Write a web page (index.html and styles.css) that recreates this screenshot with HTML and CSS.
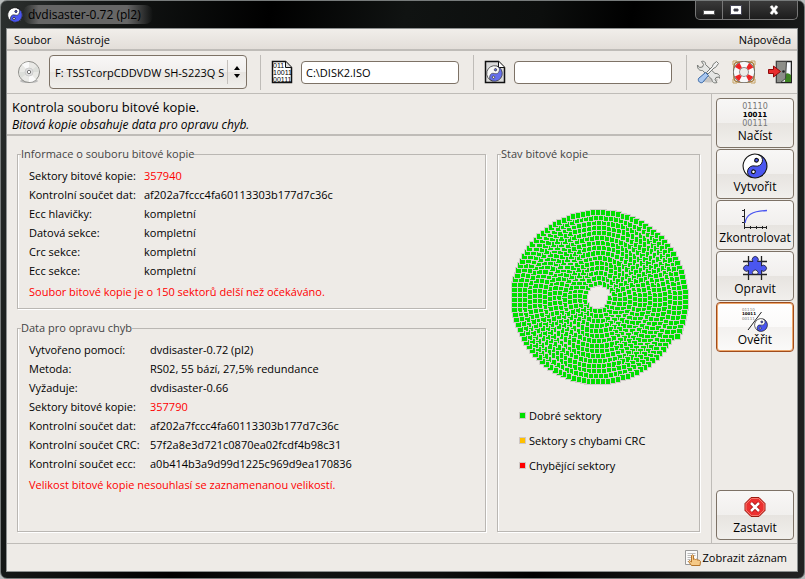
FILE: index.html
```
<!DOCTYPE html>
<html lang="cs">
<head>
<meta charset="utf-8">
<title>dvdisaster-0.72 (pl2)</title>
<link rel="stylesheet" href="styles.css">
</head>
<body>
<svg class="defs" aria-hidden="true">
  <symbol id="yinyang" viewBox="0 0 24 24">
    <g transform="rotate(15 12 12)">
    <circle cx="12" cy="12" r="11" fill="#fff"/>
    <path d="M12 1A11 11 0 0 1 12 23A5.500 5.500 0 0 1 12 12A5.500 5.500 0 0 0 12 1Z" fill="#4a56f0"/>
    <circle cx="12" cy="12" r="11" fill="none" stroke="#111"/>
    <path d="M12 23A5.500 5.500 0 0 1 12 12A5.500 5.500 0 0 0 12 1" fill="none" stroke="#111" stroke-width=".8"/>
    <circle cx="12" cy="6.500" r="1.700" fill="#4a56f0" stroke="#111"/>
    <circle cx="12" cy="17.500" r="1.700" fill="#fff" stroke="#111"/>
    </g>
  </symbol>
</svg>
<div class="window">
  <header class="titlebar">
    <svg class="app-icon" viewBox="0 0 24 24"><use href="#yinyang"/></svg>
    <h1 class="title">dvdisaster-0.72 (pl2)</h1>
    <div class="controls">
      <button class="ctl" aria-label="Minimalizovat"><svg viewBox="0 0 14 12"><rect x="1.500" y="6.500" width="11" height="4" fill="#fff" stroke="#555"/></svg></button>
      <button class="ctl" aria-label="Maximalizovat"><svg viewBox="0 0 14 12"><path d="M1.500 1.500h11v9h-11zM5 5v2h4V5z" fill="#fff" fill-rule="evenodd" stroke="#445" /></svg></button>
      <button class="ctl close" aria-label="Zavřít"><svg viewBox="0 0 14 12"><path d="M4 2l6 8M10 2l-6 8" stroke="#555" stroke-width="4"/><path d="M4 2l6 8M10 2l-6 8" stroke="#fff" stroke-width="2.600"/></svg></button>
    </div>
  </header>
  <div class="client">
    <nav class="menubar">
      <button class="menu">Soubor</button>
      <button class="menu">Nástroje</button>
      <button class="menu help">Nápověda</button>
    </nav>
    <div class="toolbar">
      <svg class="disc" viewBox="0 0 24 24"><ellipse cx="12" cy="21" rx="9" ry="2" fill="#bbb"/><circle cx="12" cy="12" r="10.500" fill="#e9e9e6" stroke="#8d8d89"/><path d="M12 12L5 4.500A10 10 0 0 1 12 2zM12 12l7 7.500A10 10 0 0 1 12 22z" fill="#fafafa"/><path d="M12 12L2 12A10 10 0 0 0 4 18zM12 12L22 12A10 10 0 0 0 20 6z" fill="#dcdeda"/><circle cx="12" cy="12" r="4" fill="#e0e0e0" stroke="#ccc"/><circle cx="12" cy="12" r="1.700" fill="#fff" stroke="#777"/></svg>
      <div class="drive">
        <select class="drive-select" aria-label="Mechanika"><option>F: TSSTcorpCDDVDW SH-S223Q SB03</option></select>
        <svg class="arrows" viewBox="0 0 8 14"><path d="M1 5l3-4 3 4zM1 9l3 4 3-4z"/></svg>
      </div>
      <span class="sep"></span>
      <svg class="file-icon" viewBox="0 0 22 24"><path d="M1.500 1.500h13l6 6v15h-19z" fill="#fff" stroke="#111" stroke-width="1.500"/><path d="M14.500 1.500v6h6" fill="#ddd" stroke="#111"/><g class="bits"><text x="2" y="8">011</text><text x="2" y="15">10011</text><text x="2" y="22">00111</text></g></svg>
      <input class="path" type="text" aria-label="Soubor bitové kopie" value="C:\DISK2.ISO">
      <span class="sep"></span>
      <svg class="file-icon" viewBox="0 0 22 24"><path d="M1.500 1.500h13l6 6v15h-19z" fill="#d8d8d8" stroke="#111" stroke-width="1.500"/><path d="M14.500 1.500v6h6" fill="#fff" stroke="#111"/><use href="#yinyang" x="2" y="5" width="17" height="17" opacity=".8"/></svg>
      <input class="path" type="text" aria-label="Soubor pro opravu chyb" value="">
      <span class="sep last"></span>
      <div class="tools">
        <button class="tool" aria-label="Předvolby"><svg viewBox="0 0 24 24"><ellipse cx="13" cy="20" rx="9" ry="2.500" fill="#c8c6c3"/><path d="M5.500 1.500l2 3-1 2.500-3 .5-2-2.500c-.5 3 1.500 6 5 5.500l9.500 9c0 3 2.500 4 5 3l-2-3 1-2 3-.5 1 1.500c.5-3-2-5.500-5-5l-9.500-9c.5-2-1.500-4-4-3z" fill="#e5e6e4" stroke="#777a76"/><path d="M20.500 1.500l2 2-3 4-1.500.5-6 6-1.500-1.500 6-6 .5-2z" fill="#f2f2f2" stroke="#777a76"/><path d="M9.500 12.500l3 3-6 7c-2 1-5-1-4-4z" fill="#a9c7ef" stroke="#3465a4"/></svg></button>
        <button class="tool" aria-label="Nápověda k programu"><svg viewBox="0 0 24 24"><rect x="2" y="2" width="20" height="20" rx="4" fill="none" stroke="#a77b37" stroke-width="1.500"/><path d="M1 5V1h4M19 1h4v4M23 19v4h-4M5 23H1v-4" fill="none" stroke="#c6a262"/><circle cx="12" cy="12" r="7.500" fill="none" stroke="#666" stroke-width="7"/><circle cx="12" cy="12" r="7.500" fill="none" stroke="#f8f8f8" stroke-width="5.500"/><circle cx="12" cy="12" r="7.500" fill="none" stroke="#ee2424" stroke-width="5.500" stroke-dasharray="4.500 7.280" stroke-dashoffset="-3.640"/></svg></button>
        <button class="tool" aria-label="Ukončit"><svg viewBox="0 0 24 24"><path d="M8.500 1.500h15v21h-15z" fill="#f8fbff" stroke="#222" stroke-width="1.500"/><path d="M17 14q3-2 6 1v7h-6z" fill="#3d8321"/><path d="M8.500 1.500h10l-1 17-5 4h-4z" fill="#8c8e89" stroke="#444"/><circle cx="15.500" cy="11.500" r="1.300" fill="#222"/><path d="M.5 9.500h5V6l7 5.500-7 5.500v-3.500H.5z" fill="#e82c2c" stroke="#8e0909"/></svg></button>
      </div>
    </div>
    <div class="middle">
      <main class="content">
        <div class="heading">
          <h2>Kontrola souboru bitové kopie.</h2>
          <p>Bitová kopie obsahuje data pro opravu chyb.</p>
        </div>
        <div class="panels">
          <fieldset class="frame info">
            <legend>Informace o souboru bitové kopie</legend>
            <dl class="rows">
              <dt>Sektory bitové kopie:</dt><dd class="bad">357940</dd>
              <dt>Kontrolní součet dat:</dt><dd>af202a7fccc4fa60113303b177d7c36c</dd>
              <dt>Ecc hlavičky:</dt><dd>kompletní</dd>
              <dt>Datová sekce:</dt><dd>kompletní</dd>
              <dt>Crc sekce:</dt><dd>kompletní</dd>
              <dt>Ecc sekce:</dt><dd>kompletní</dd>
            </dl>
            <p class="message bad">Soubor bitové kopie je o 150 sektorů delší než očekáváno.</p>
          </fieldset>
          <fieldset class="frame ecc">
            <legend>Data pro opravu chyb</legend>
            <dl class="rows wide">
              <dt>Vytvořeno pomocí:</dt><dd>dvdisaster-0.72 (pl2)</dd>
              <dt>Metoda:</dt><dd>RS02, 55 bází, 27,5% redundance</dd>
              <dt>Vyžaduje:</dt><dd>dvdisaster-0.66</dd>
              <dt>Sektory bitové kopie:</dt><dd class="bad">357790</dd>
              <dt>Kontrolní součet dat:</dt><dd>af202a7fccc4fa60113303b177d7c36c</dd>
              <dt>Kontrolní součet CRC:</dt><dd>57f2a8e3d721c0870ea02fcdf4b98c31</dd>
              <dt>Kontrolní součet ecc:</dt><dd>a0b414b3a9d99d1225c969d9ea170836</dd>
            </dl>
            <p class="message bad">Velikost bitové kopie nesouhlasí se zaznamenanou velikostí.</p>
          </fieldset>
          <fieldset class="frame state">
            <legend>Stav bitové kopie</legend>
            <svg id="spiral" class="spiral" viewBox="0 0 180 180" role="img" aria-label="Stav sektorů"></svg>
            <ul class="key">
              <li><i class="good"></i>Dobré sektory</li>
              <li><i class="crc"></i>Sektory s chybami CRC</li>
              <li><i class="missing"></i>Chybějící sektory</li>
            </ul>
          </fieldset>
        </div>
      </main>
      <aside class="actions">
        <button class="action"><svg viewBox="0 0 28 28"><g class="read"><text x="14" y="8">01110</text><text class="on" x="14" y="16">10011</text><text x="14" y="25">00111</text></g></svg><span>Načíst</span></button>
        <button class="action"><svg viewBox="0 0 28 28"><use href="#yinyang" x="1" y="1" width="26" height="26"/></svg><span>Vytvořit</span></button>
        <button class="action"><svg viewBox="0 0 28 28"><path d="M3.500 6v18.500H26M1 7.500h2M1 13.500h2M1 19.500h2M9.500 23v3M15.500 23v3M21.500 23v3M25.500 23v3M3.500 24v2" fill="none" stroke="#222"/><path d="M4 20C5 12 11 8 26 7.500" fill="none" stroke="#4a56f0" stroke-width="1.300"/></svg><span>Zkontrolovat</span></button>
        <button class="action"><svg viewBox="0 0 28 28"><path d="M7.500 2v24M20.500 2v24M2 7.500h24M2 20.500h24" stroke="#222" stroke-width="1.300"/><path d="M7.500 7.500h4.500a3 3 0 1 1 4.500 0h4v4.500a3 3 0 1 1 0 4.500v4h-4a2.800 2.800 0 1 0-4.500 0h-4.500v-4a3 3 0 1 1 0-4.500z" fill="#4a56f0" stroke="#223" stroke-width=".8"/></svg><span>Opravit</span></button>
        <button class="action active"><svg viewBox="0 0 28 28"><g class="tiny"><text x="1" y="6">01110</text><text class="on" x="1" y="10">10011</text><text x="1" y="15">00111</text></g><path d="M20.500 7L7 25" stroke="#222"/><use href="#yinyang" x="13" y="13" width="14" height="14"/></svg><span>Ověřit</span></button>
        <button class="action stop"><svg viewBox="0 0 28 28"><path d="M10 4.500h8l6 6v7l-6 6h-8l-6-6v-7z" fill="#ec3030" stroke="#9a1a10"/><path d="M10.500 5.500h7l5.500 5.500v6l-5.500 5.500h-7L5 17v-6z" fill="none" stroke="#f47a6e"/><path d="M10 10l8 8M18 10l-8 8" stroke="#a01010" stroke-width="4"/><path d="M10 10l8 8M18 10l-8 8" stroke="#fff" stroke-width="2.500"/></svg><span>Zastavit</span></button>
      </aside>
    </div>
    <footer class="status">
      <button class="log"><svg viewBox="0 0 16 16"><path d="M.5.5h12v14H.5z" fill="#fafafa" stroke="#999"/><path d="M2.500 3.500h8M2.500 5.500h8M2.500 7.500h5M2.500 9.500h3M2.500 11.500h3" stroke="#bbb"/><path d="M6.500 15.500l-3-4 1-1 2 1.500V5.500q1-1.500 2 0v4q1-1 2 0q1-1 2 .5q2-.5 3 1.500l-.5 4z" fill="#f5c987" stroke="#b5752c"/></svg>Zobrazit záznam</button>
    </footer>
  </div>
</div>
<script src="spiral.js"></script>
</body>
</html>
```
FILE: styles.css
```
* { box-sizing: border-box; }
html, body { height: 100%; }
body {
  margin: 0;
  background: #b8bcbc;
  font: 11px/19px "Open Sans", "Noto Sans", sans-serif;
  color: #000;
}
h1, h2, p, dl, dd, ul { margin: 0; padding: 0; font-weight: normal; }
button { font: inherit; color: inherit; padding: 0; border: 0; background: none; }
svg { display: block; flex: none; }
.defs { position: absolute; width: 0; height: 0; }
.window {
  height: 100vh;
  display: flex;
  flex-direction: column;
  padding: 0 6px 6px 5px;
  border: 1px solid #777b7b;
  border-radius: 7px;
  background: linear-gradient(100deg, #2c302f 0, #161918 10%, #000 30%, #101312 45%, #0c0e0d 60%, #000 70%, #191b1a 90%, #222 100%);
}
.titlebar { height: 27px; flex: none; display: flex; align-items: center; }
.app-icon { width: 16px; height: 16px; margin-left: 1px; }
.title {
  padding: 0 12px 0 5px;
  font-size: 12px;
  color: #000;
  background: linear-gradient(90deg, transparent, #666 12%, #666 80%, transparent);
  border-radius: 8px;
}
.controls {
  align-self: flex-start;
  display: flex;
  margin-left: auto;
  border: 1px solid #777;
  border-top: 0;
  border-radius: 0 0 5px 5px;
  background: linear-gradient(#3a3a3a, #1c1c1c);
}
.ctl { width: 27px; height: 18px; display: grid; place-items: center; border-right: 1px solid #777; }
.ctl svg { width: 14px; height: 12px; }
.ctl.close { width: 47px; border: 0; }
.client {
  flex: 1;
  min-height: 0;
  display: flex;
  flex-direction: column;
  border: 1px solid #8d9090;
  background: #eeebe7;
}
.menubar {
  display: flex;
  height: 22px;
  flex: none;
  padding: 0 6px 0 7px;
  gap: 15px;
  border-bottom: 2px solid #bfbcb8;
  background: linear-gradient(#f1eeea, #e3ded9);
}
.help { margin-left: auto; }
.toolbar {
  height: 43px;
  flex: none;
  display: flex;
  align-items: center;
  padding: 0 5px 0 10px;
  border-bottom: 1px solid #bfbcb8;
}
.disc { width: 24px; height: 24px; }
.drive {
  position: relative;
  width: 198px;
  height: 34px;
  margin: 0 13px 0 8px;
}
.drive-select {
  appearance: none;
  width: 100%;
  height: 100%;
  padding: 0 22px 0 5px;
  border: 1px solid #7d7266;
  border-radius: 4px;
  background: linear-gradient(#f8f7f6, #f1efed 50%, #e7e4e0 51%, #f1efec);
  font: inherit;
  color: #000;
}
.arrows { position: absolute; right: 6px; top: 10px; width: 8px; height: 14px; }
.drive::after { content: ""; position: absolute; right: 19px; top: 5px; bottom: 5px; border-left: 1px solid #c4c0bc; }
.sep { width: 1px; height: 35px; background: #bfbcb8; }
.file-icon { width: 22px; height: 24px; margin: 0 8px 0 10px; }
.bits text { font: 7px "Liberation Sans", sans-serif; }
.path {
  flex: 1;
  min-width: 0;
  height: 23px;
  padding: 0 4px;
  margin-right: 14px;
  border: 1px solid #7d7266;
  border-radius: 4px;
  background: #fff;
  font: inherit;
}
.sep.last { margin-right: 9px; }
.tools { display: flex; gap: 12px; }
.tool svg { width: 24px; height: 24px; }
.middle { flex: 1; min-height: 0; display: flex; }
.content { flex: 1; min-width: 0; display: flex; flex-direction: column; }
.heading { height: 42px; flex: none; padding: 4px 5px 0; border-bottom: 2px solid #bfbcb8; }
.heading h2 { font-size: 13px; line-height: 19px; }
.heading p { font-size: 12px; line-height: 15px; font-style: italic; }
.panels {
  flex: 1;
  min-height: 0;
  display: grid;
  grid-template: 163px 1fr / 1fr 203px;
  gap: 11px;
  padding: 10px 11px 11px 10px;
}
.frame {
  min-width: 0;
  margin: 0;
  padding: 4px 11px;
  border: 1px solid #bab7b3;
  box-shadow: 1px 1px #fff, inset 1px 0 #fff;
}
.frame legend { padding: 0; margin-left: -8px; line-height: 16px; color: #444; }
.state { grid-area: 1 / 2 / 3 / 3; display: flex; flex-direction: column; }
.rows { display: grid; grid-template-columns: 115px 1fr; }
.rows.wide { grid-template-columns: 121px 1fr; }
.rows dt, .rows dd, .message { white-space: nowrap; }
.message { margin-top: 2px; }
.bad { color: #f00; }
.spiral { width: 180px; height: 180px; margin-top: 43px; }
.key { list-style: none; margin: 17px 0 0 10px; display: grid; gap: 6px; }
.key li { display: flex; align-items: center; gap: 3px; }
.key i { width: 7px; height: 7px; border: 1px solid #cfc8c6; }
.good { background: #00e000; }
.crc { background: #ffc000; }
.missing { background: #f00; }
.actions {
  width: 86px;
  flex: none;
  display: flex;
  flex-direction: column;
  gap: 1px;
  padding: 4px 3px 3px 4px;
  border-left: 1px solid #bfbcb8;
}
.action {
  height: 50px;
  flex: none;
  display: flex;
  flex-direction: column;
  align-items: center;
  border: 1px solid #7d7266;
  border-radius: 4px;
  background: linear-gradient(#f8f7f6, #f1efed 50%, #e7e4e0 51%, #f1efec);
  font-size: 12px;
  line-height: 13px;
}
.action svg { width: 28px; height: 28px; margin-top: 2px; }
.active { border-color: #a04c1c; background: linear-gradient(#fff, #fbfaf9 50%, #f3f1ef 51%, #fbfaf9); box-shadow: inset 0 0 0 1px #eda76c; }
.stop { margin-top: auto; }
.read text { font: 8px "DejaVu Sans", sans-serif; text-anchor: middle; fill: #777; }
.read .on { font-weight: bold; font-size: 7px; fill: #000; }
.tiny text { font: 4px "DejaVu Sans", sans-serif; fill: #777; }
.tiny .on { font-weight: bold; fill: #000; }
.status { height: 28px; flex: none; display: flex; justify-content: flex-end; padding-right: 10px; border-top: 1px solid #bfbcb8; }
.log { display: flex; align-items: center; gap: 2px; }
.log svg { width: 16px; height: 16px; }
```
FILE: spiral.js
```
// Draws the sector map: one small square per segment along a growing spiral.
// Each square's outline covers the edge of the one drawn before it.
const svg = document.getElementById("spiral");
const pitch = 5;
const start = 12;
const turns = 15.08;
let shapes = "";
for (let a = 0; a < turns * 2 * Math.PI;) {
  const r = start + pitch * a / (2 * Math.PI);
  const x = Math.round(90 + r * Math.cos(a)) - 3;
  const y = Math.round(90 + r * Math.sin(a)) - 3;
  shapes += `<rect x="${x - 0.5}" y="${y - 0.5}" width="6" height="6"/>`;
  a += Math.atan(pitch / r);
}
svg.innerHTML = `<g shape-rendering="crispEdges" fill="#00e000" stroke="#d2cccb">${shapes}</g>`;
```
